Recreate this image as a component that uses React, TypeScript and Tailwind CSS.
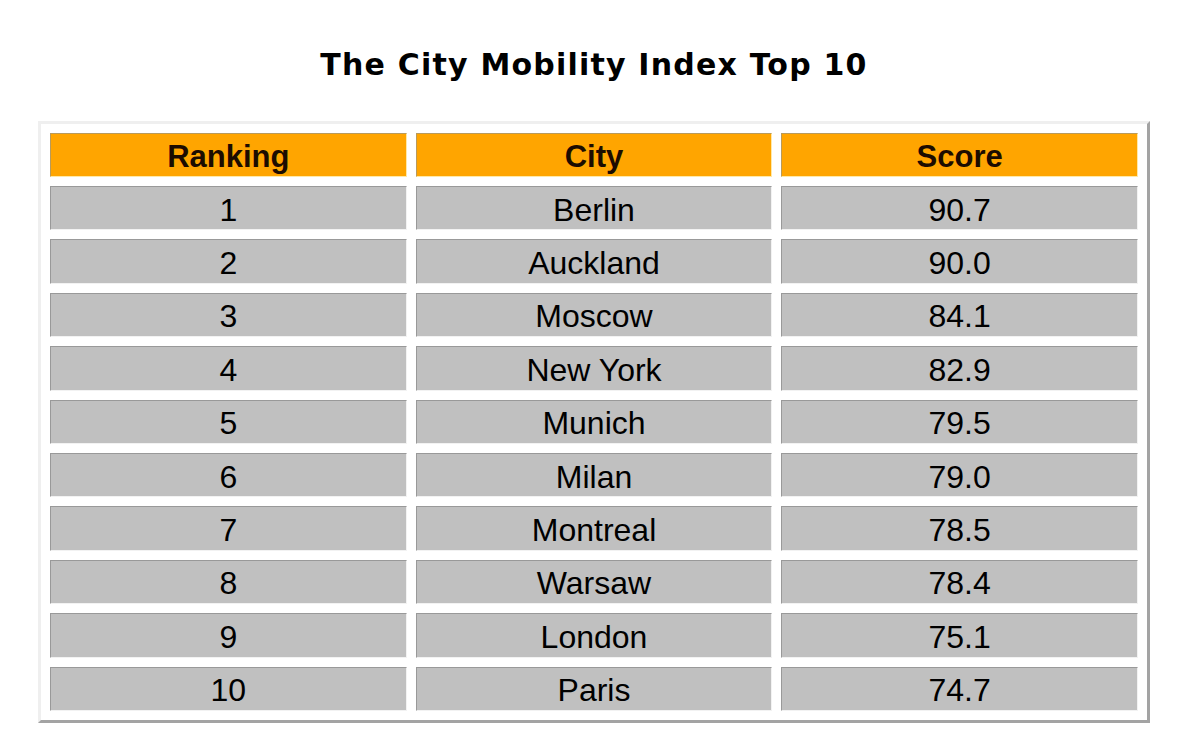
const rows: [number, string, string][] = [
  [1, 'Berlin', '90.7'],
  [2, 'Auckland', '90.0'],
  [3, 'Moscow', '84.1'],
  [4, 'New York', '82.9'],
  [5, 'Munich', '79.5'],
  [6, 'Milan', '79.0'],
  [7, 'Montreal', '78.5'],
  [8, 'Warsaw', '78.4'],
  [9, 'London', '75.1'],
  [10, 'Paris', '74.7'],
];

const headCell =
  'h-[44px] p-0 pt-[3px] bg-[#ffa500] text-[#1c0c00] text-[31px] font-bold text-center align-middle border border-t-[#b89a5c] border-l-[#b89a5c] border-b-[#ffe9a8] border-r-[#ffe9a8]';
const bodyCell =
  'h-[44.4px] p-0 pt-[3px] bg-[#c0c0c0] text-black text-[32px] text-center align-middle border border-t-[#999999] border-l-[#999999] border-b-[#f2f2f2] border-r-[#f2f2f2]';

export default function App() {
  return (
    <div className="h-screen overflow-hidden bg-white pt-[48px]">
      <h1 className="mb-[40px] text-center text-[30px] leading-[33px] tracking-[1.2px] font-bold text-black font-['Verdana','DejaVu_Sans',sans-serif]">
        The City Mobility Index Top 10
      </h1>
      <table className="mx-auto w-[1112px] table-fixed border-separate border-spacing-[9px] border-[3px] border-t-[#efefef] border-l-[#efefef] border-r-[#a3a3a3] border-b-[#a3a3a3] font-['Liberation_Sans',Arial,sans-serif] leading-none">
        <thead>
          <tr>
            <th className={headCell}>Ranking</th>
            <th className={headCell}>City</th>
            <th className={headCell}>Score</th>
          </tr>
        </thead>
        <tbody>
          {rows.map(([rank, city, score]) => (
            <tr key={rank}>
              <td className={bodyCell}>{rank}</td>
              <td className={bodyCell}>{city}</td>
              <td className={bodyCell}>{score}</td>
            </tr>
          ))}
        </tbody>
      </table>
    </div>
  );
}
